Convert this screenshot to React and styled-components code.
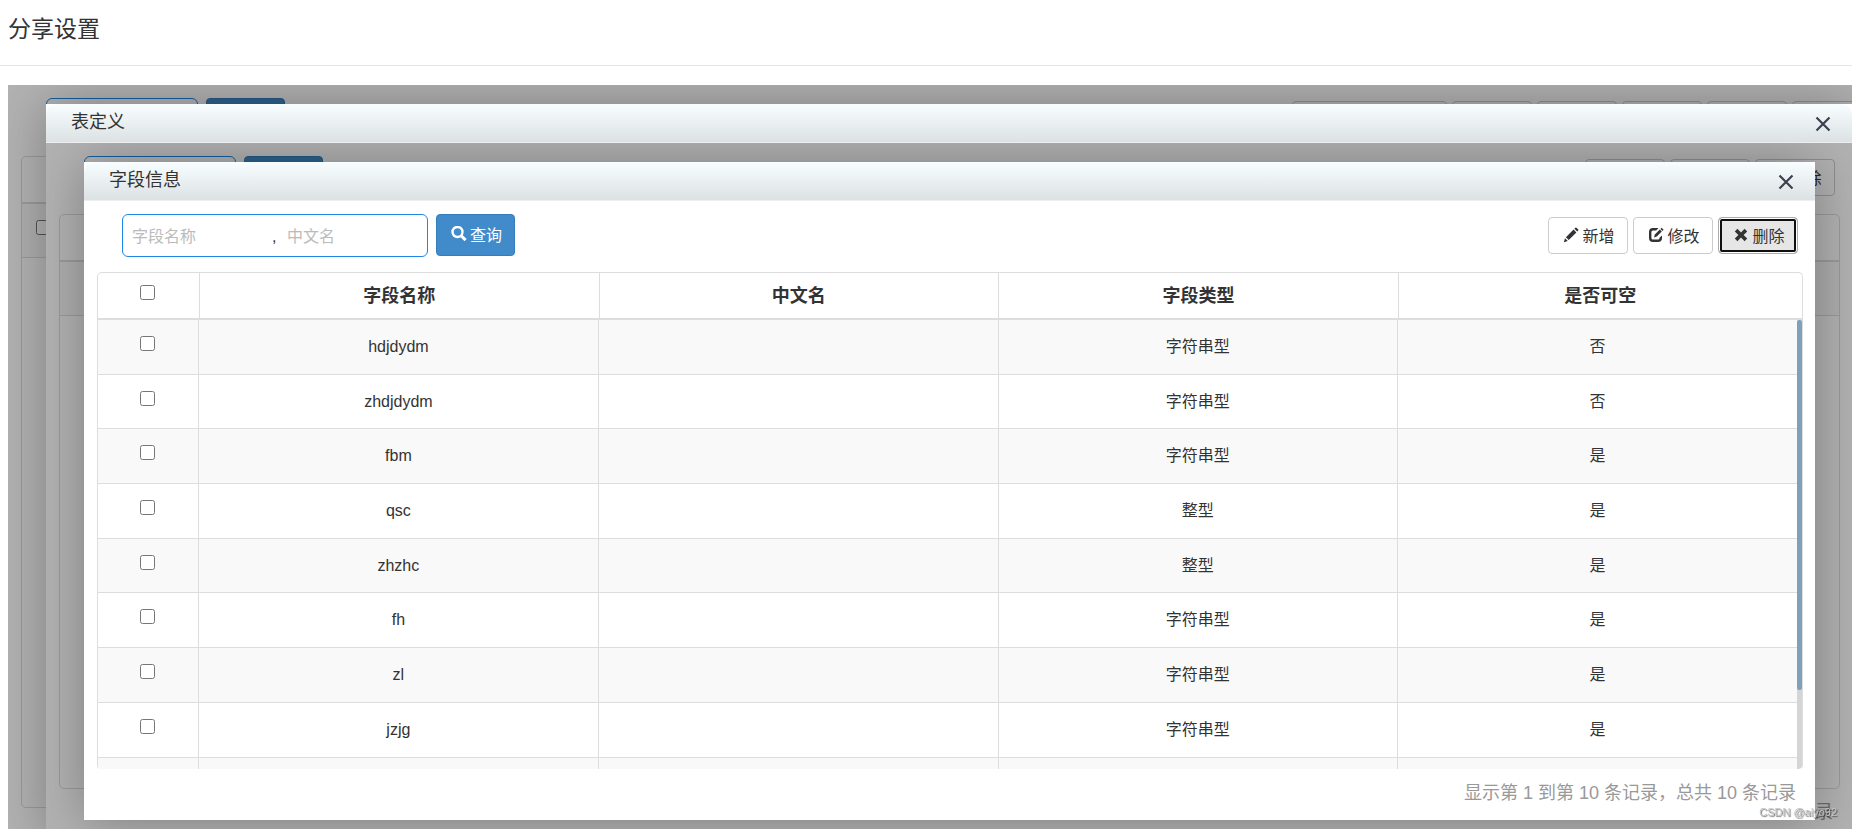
import React, { useId } from "react";
import styled, { createGlobalStyle } from "styled-components";

const GlobalStyle = createGlobalStyle`
  *, *::before, *::after { box-sizing: border-box; }
  html, body { margin: 0; background: #fff; }
  body {
    color: #333;
    font-family: "Liberation Sans", "Noto Sans CJK SC", sans-serif;
    font-size: 16px;
  }
  button, input { font: inherit; color: inherit; }
`;

const Page = styled.div`
  display: flex;
  flex-direction: column;
  height: 100vh;
  overflow: hidden;
`;

const PageHeader = styled.header`
  flex: none;
  height: 66px;
  padding: 0 8px;
  border-bottom: 1px solid #e5e5e5;
`;

const PageTitle = styled.h1`
  margin: 0;
  font-size: 23px;
  font-weight: 400;
  line-height: 58px;
`;

const Frame = styled.main`
  position: relative;
  flex: none;
  height: calc(100vh - 56px);
  margin: 19px -37px 0 8px;
  overflow: hidden;
`;

const Shade = styled.div`
  position: absolute;
  inset: 0;
  background: rgba(0, 0, 0, 0.3);
`;

const DialogBox = styled.section`
  position: absolute;
  inset: 19px 37px 19px 38px;
  display: flex;
  flex-direction: column;
  background: #fff;
  box-shadow: 1px 1px 50px rgba(0, 0, 0, 0.3);
`;

const DialogHeader = styled.header`
  flex: none;
  display: flex;
  align-items: center;
  justify-content: space-between;
  height: 39px;
  padding: 1px 21px 0 25px;
  border-bottom: 1px solid #eee;
  border-radius: 10px 10px 0 0;
  background: linear-gradient(#f8fdff, #dce1e4);
`;

const DialogTitle = styled.h2`
  margin: 0;
  font-size: 18px;
  font-weight: 400;
  line-height: 34px;
  align-self: flex-start;
`;

const CloseButton = styled.button`
  display: flex;
  padding: 0;
  border: 0;
  background: none;
  color: #3c4150;
`;

const DialogBody = styled.div`
  position: relative;
  flex: 1;
  min-height: 0;
  overflow: hidden;
`;

const Panel = styled.div`
  display: flex;
  flex-direction: column;
  height: 100%;
  padding: 13px 12px 0 13px;
`;

const Toolbar = styled.div`
  flex: none;
  display: flex;
  align-items: flex-start;
  gap: 8px;
  height: 58px;
  padding: 0 5px 0 25px;
`;

const SearchBox = styled.div`
  display: flex;
  align-items: center;
  height: 43px;
  padding: 2px 9px 0;
  border: 1px solid #1e88e5;
  border-radius: 6px;
  background: #fff;
`;

const SearchInput = styled.input`
  width: ${(p) => p.$width};
  height: 36px;
  padding: 0;
  border: 0;
  outline: 0;
  background: none;
  &::placeholder { color: #bbb; opacity: 1; }
`;

const Comma = styled.span`
  width: 15px;
`;

const QueryButton = styled.button`
  display: flex;
  align-items: center;
  justify-content: center;
  gap: 3px;
  width: 79px;
  height: 42px;
  padding: 0 0 2px 2px;
  border: 1px solid #357ebd;
  border-radius: 4px;
  background: #428bca;
  color: #fff;
`;

const Actions = styled.div`
  display: flex;
  gap: 5px;
  margin: 3px 0 0 auto;
`;

const ActionButton = styled.button`
  display: flex;
  align-items: center;
  justify-content: center;
  gap: 3px;
  width: ${(p) => (p.$wide ? "155px" : "80px")};
  height: 37px;
  padding: 0 0 2px 2px;
  border: 1px solid ${(p) => (p.$active ? "#adadad" : "#ccc")};
  border-radius: 4px;
  outline: 0;
  background: ${(p) => (p.$active ? "#e6e6e6" : "#fff")};
  box-shadow: ${(p) => (p.$active ? "inset 0 0 0 1px #fff, inset 0 0 0 3px #101010" : "none")};
`;

const TableBox = styled.div`
  flex: 1;
  min-height: 0;
  display: flex;
  flex-direction: column;
  overflow: hidden;
  border: 1px solid #ddd;
  border-bottom-color: ${(p) => (p.$scroll ? "transparent" : "#ddd")};
  border-radius: 5px;
`;

const HeadTable = styled.table`
  flex: none;
  width: 100%;
  table-layout: fixed;
  border-collapse: separate;
  border-spacing: 0;
  border-bottom: 2px solid #ddd;
`;

const HeadCell = styled.th`
  width: ${(p) => p.$width || "auto"};
  height: 45px;
  padding: 0;
  border-left: ${(p) => (p.$first ? "0" : "1px solid #ddd")};
  font-size: 18px;
  font-weight: 700;
  line-height: 24px;
`;

const Scroller = styled.div`
  flex: 1;
  min-height: 0;
  display: flex;
  align-items: flex-start;
  overflow: hidden;
`;

const BodyTable = styled.table`
  flex: 1;
  min-width: 0;
  width: 100%;
  height: ${(p) => p.$height || "auto"};
  table-layout: fixed;
  border-collapse: separate;
  border-spacing: 0;
`;

const BodyRow = styled.tr`
  &:nth-child(odd) { background: #f9f9f9; }
`;

const BodyCell = styled.td`
  width: ${(p) => p.$width || "auto"};
  height: 54px;
  padding: 0;
  border-left: ${(p) => (p.$first ? "0" : "1px solid #ddd")};
  border-bottom: 1px solid #ddd;
  text-align: center;
  line-height: 24px;
`;

const Check = styled.input`
  display: block;
  width: 15px;
  height: 15px;
  margin: 0 auto 7px;
`;

const CheckSlot = styled.label`
  display: block;
  padding-right: 2px;
`;

const Track = styled.div`
  flex: none;
  align-self: stretch;
  width: 5px;
  background: #d5d5d5;
`;

const Thumb = styled.div`
  height: ${(p) => p.$size};
  border-radius: 4px;
  background: #7f9fba;
`;

const Summary = styled.p`
  flex: none;
  height: 50px;
  margin: 0;
  padding: 0 7px;
  color: #999;
  font-size: 18px;
  line-height: 46px;
  text-align: right;
`;

const Watermark = styled.div`
  position: fixed;
  right: 15px;
  bottom: 9px;
  font-size: 11px;
  line-height: 16px;
  color: #c4c4c4;
  text-shadow: 1px 1px 1px rgba(0, 0, 0, 0.55);
`;

const CloseIcon = () => (
  <svg width="16" height="16" viewBox="0 0 16 16" fill="none" stroke="currentColor" strokeWidth="2.2">
    <path d="M1.5 1.5 14.5 14.5M14.5 1.5 1.5 14.5" />
  </svg>
);

const SearchIcon = () => (
  <svg width="16" height="16" viewBox="0 0 16 16" fill="none" stroke="currentColor">
    <circle cx="6.5" cy="6" r="5" strokeWidth="2.4" />
    <path d="M10.2 9.7 14.6 14.1" strokeWidth="3" />
  </svg>
);

const PencilIcon = () => (
  <svg width="16" height="16" viewBox="0 0 16 16" fill="currentColor">
    <path d="M.8 15.2 2 11.2 4.8 14ZM2.9 10.3 10.6 2.6 13.4 5.4 5.7 13.1ZM11.4 1.8 12.4.8Q13 .3 13.7.9L15.1 2.3Q15.7 3 15.2 3.6L14.2 4.6Z" />
  </svg>
);

const EditIcon = () => (
  <svg width="16" height="16" viewBox="0 0 16 16" fill="currentColor">
    <path d="M10.5 1H5Q1 1 1 5V11Q1 15 5 15H10Q14 15 14 11V8.5L11.5 10.8V11Q11.5 12.6 10 12.6H5Q3.4 12.6 3.4 11V5Q3.4 3.4 5 3.4H8.2Z" />
    <path d="M6 10.4 6.8 7.6 11.8 2.6 13.8 4.6 8.8 9.6ZM12.5 1.9 13.6.8 15.6 2.8 14.5 3.9Z" />
  </svg>
);

const RemoveIcon = () => (
  <svg width="16" height="16" viewBox="0 0 16 16" fill="currentColor">
    <path d="M4.4 1.8 8 5.4 11.6 1.8 14.2 4.4 10.6 8 14.2 11.6 11.6 14.2 8 10.6 4.4 14.2 1.8 11.6 5.4 8 1.8 4.4Z" />
  </svg>
);

const ADD = { label: "新增", icon: PencilIcon };
const EDIT = { label: "修改", icon: EditIcon };
const REMOVE = { label: "删除", icon: RemoveIcon };

function Dialog({ title, children }) {
  const id = useId();
  return (
    <DialogBox role="dialog" aria-labelledby={id}>
      <DialogHeader>
        <DialogTitle id={id}>{title}</DialogTitle>
        <CloseButton type="button" aria-label="关闭"><CloseIcon /></CloseButton>
      </DialogHeader>
      <DialogBody>{children}</DialogBody>
    </DialogBox>
  );
}

function ListPanel({ fields, actions, columns, columnWidth, rows, checkWidth, headCheck, scroll, tableHeight, summary }) {
  return (
    <Panel>
      <Toolbar>
        <SearchBox>
          {fields.map((f, i) => (
            <React.Fragment key={f.label}>
              {i > 0 && <Comma>,</Comma>}
              <SearchInput $width={f.width} placeholder={f.label} aria-label={f.label || "名称"} />
            </React.Fragment>
          ))}
        </SearchBox>
        <QueryButton type="button"><SearchIcon />查询</QueryButton>
        <Actions>
          {actions.map(({ label, icon: Icon, wide, active }, i) => (
            <ActionButton key={i} type="button" $wide={wide} $active={active}>
              {Icon && <Icon />}{label}
            </ActionButton>
          ))}
        </Actions>
      </Toolbar>
      <TableBox $scroll={scroll}>
        <HeadTable>
          <thead>
            <tr>
              <HeadCell $first $width={checkWidth[0]}>
                {headCheck && <CheckSlot><Check type="checkbox" aria-label="全选" /></CheckSlot>}
              </HeadCell>
              {columns.map((c, i) => (
                <HeadCell key={i} $width={i < columns.length - 1 ? columnWidth : undefined}>{c}</HeadCell>
              ))}
            </tr>
          </thead>
        </HeadTable>
        <Scroller>
          <BodyTable $height={tableHeight}>
            <tbody>
              {rows.map((row, r) => (
                <BodyRow key={r}>
                  <BodyCell $first $width={checkWidth[1]}>
                    <CheckSlot><Check type="checkbox" aria-label={row[0] || "选择"} /></CheckSlot>
                  </BodyCell>
                  {row.map((v, c) => <BodyCell key={c}>{v}</BodyCell>)}
                </BodyRow>
              ))}
            </tbody>
          </BodyTable>
          {scroll && <Track><Thumb $size={scroll} /></Track>}
        </Scroller>
      </TableBox>
      <Summary>{summary}</Summary>
    </Panel>
  );
}

const FIELD_ROWS = [
  ["hdjdydm", "", "字符串型", "否"],
  ["zhdjdydm", "", "字符串型", "否"],
  ["fbm", "", "字符串型", "是"],
  ["qsc", "", "整型", "是"],
  ["zhzhc", "", "整型", "是"],
  ["fh", "", "字符串型", "是"],
  ["zl", "", "字符串型", "是"],
  ["jzjg", "", "字符串型", "是"],
  ["", "", "", ""],
  ["", "", "", ""],
];

export default function App() {
  return (
    <Page>
      <GlobalStyle />
      <PageHeader><PageTitle>分享设置</PageTitle></PageHeader>
      <Frame>
        <ListPanel
          fields={[{ label: "", width: "132px" }]}
          actions={[{ wide: true }, {}, {}, {}, {}, {}]}
          columns={["", ""]}
          rows={[["", ""]]}
          checkWidth={["44px", "44px"]}
        />
        <Shade />
        <Dialog title="表定义">
          <ListPanel
            fields={[{ label: "", width: "132px" }]}
            actions={[ADD, EDIT, REMOVE]}
            columns={["", ""]}
            rows={[["", ""]]}
            checkWidth={["102px", "101px"]}
            summary="总共 1 条记录"
          />
          <Shade />
          <Dialog title="字段信息">
            <ListPanel
              fields={[{ label: "字段名称", width: "140px" }, { label: "中文名", width: "131px" }]}
              actions={[ADD, EDIT, { ...REMOVE, active: true }]}
              columns={["字段名称", "中文名", "字段类型", "是否可空"]}
              columnWidth="23.45%"
              rows={FIELD_ROWS}
              checkWidth={["101px", "100px"]}
              headCheck
              scroll="370px"
              tableHeight="547px"
              summary="显示第 1 到第 10 条记录，总共 10 条记录"
            />
          </Dialog>
        </Dialog>
      </Frame>
      <Watermark>CSDN @aiyo92</Watermark>
    </Page>
  );
}
